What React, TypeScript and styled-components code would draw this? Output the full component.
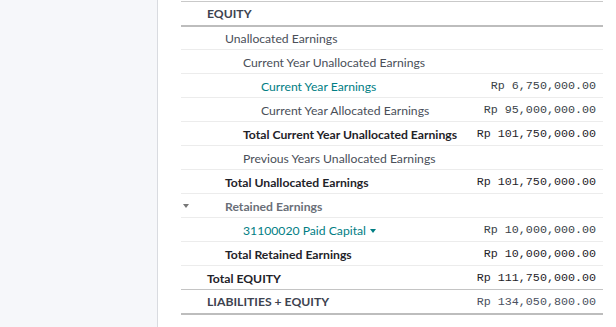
import styled, { createGlobalStyle } from 'styled-components'

const GlobalStyle = createGlobalStyle`
  html, body {
    margin: 0;
    padding: 0;
    background: #ffffff;
  }
  body {
    font-family: 'Lato', 'Open Sans', sans-serif;
  }
`

type Tone = 'normal' | 'link' | 'total' | 'section' | 'muted' | 'grand'
type Line = 'light' | 'heavy' | 'medium'

interface ReportLine {
  id: string
  label: string
  level: number
  amount?: string
  tone: Tone
  line: Line
  caret?: boolean
  foldable?: boolean
}

const lines: ReportLine[] = [
  { id: 'equity', label: 'EQUITY', level: 0, tone: 'section', line: 'heavy' },
  { id: 'unalloc', label: 'Unallocated Earnings', level: 1, tone: 'normal', line: 'light' },
  { id: 'cyu', label: 'Current Year Unallocated Earnings', level: 2, tone: 'normal', line: 'light' },
  { id: 'cye', label: 'Current Year Earnings', level: 3, amount: 'Rp 6,750,000.00', tone: 'link', line: 'light' },
  { id: 'cyae', label: 'Current Year Allocated Earnings', level: 3, amount: 'Rp 95,000,000.00', tone: 'normal', line: 'light' },
  { id: 'tcyu', label: 'Total Current Year Unallocated Earnings', level: 2, amount: 'Rp 101,750,000.00', tone: 'total', line: 'light' },
  { id: 'pyu', label: 'Previous Years Unallocated Earnings', level: 2, tone: 'normal', line: 'light' },
  { id: 'tu', label: 'Total Unallocated Earnings', level: 1, amount: 'Rp 101,750,000.00', tone: 'total', line: 'light' },
  { id: 're', label: 'Retained Earnings', level: 1, tone: 'muted', line: 'light', foldable: true },
  { id: 'pc', label: '31100020 Paid Capital', level: 2, amount: 'Rp 10,000,000.00', tone: 'link', line: 'light', caret: true },
  { id: 'tre', label: 'Total Retained Earnings', level: 1, amount: 'Rp 10,000,000.00', tone: 'total', line: 'light' },
  { id: 'te', label: 'Total EQUITY', level: 0, amount: 'Rp 111,750,000.00', tone: 'total', line: 'medium' },
  { id: 'le', label: 'LIABILITIES + EQUITY', level: 0, amount: 'Rp 134,050,800.00', tone: 'grand', line: 'heavy' },
]

const toneColor: Record<Tone, string> = {
  normal: '#4a4f59',
  link: '#017e84',
  total: '#1f2329',
  section: '#3d4350',
  muted: '#6a6f78',
  grand: '#3d4350',
}

const amountColor: Record<Tone, string> = {
  normal: '#3a3f48',
  link: '#3a3f48',
  total: '#1f2329',
  section: '#1f2329',
  muted: '#3a3f48',
  grand: '#4a5060',
}

const lineStyle: Record<Line, string> = {
  light: '1px solid #ececec',
  medium: '1px solid #c4c4c4',
  heavy: '2px solid #bdbdbd',
}

const App = () => (
  <>
    <GlobalStyle />
    <Page>
      <Sidebar />
      <Content>
        <Report>
          <tbody>
            {lines.map((row) => (
              <Row key={row.id} $line={row.line}>
                <LabelCell $level={row.level} $tone={row.tone}>
                  {row.foldable && <Fold />}
                  {row.label}
                  {row.caret && <Caret />}
                </LabelCell>
                <AmountCell $tone={row.tone}>{row.amount}</AmountCell>
              </Row>
            ))}
          </tbody>
        </Report>
      </Content>
    </Page>
  </>
)

const Page = styled.div`
  display: flex;
  height: 327px;
  overflow: hidden;
`

const Sidebar = styled.aside`
  width: 157px;
  flex: none;
  background: #f6f7fa;
  border-right: 1px solid #d9dbe0;
`

const Content = styled.main`
  flex: 1;
  padding: 0 13px 0 23px;
`

const Report = styled.table`
  width: 100%;
  border-collapse: collapse;
  border-top: 1px solid #c9c9c9;
  margin-top: 1px;
`

const Row = styled.tr<{ $line: Line }>`
  height: 24px;
  border-bottom: ${(p) => lineStyle[p.$line]};
`

const LabelCell = styled.td<{ $level: number; $tone: Tone }>`
  position: relative;
  padding: 1px 0 0 ${(p) => 26 + p.$level * 18}px;
  font-size: 12.2px;
  white-space: nowrap;
  color: ${(p) => toneColor[p.$tone]};
  font-weight: ${(p) => (['total', 'section', 'grand', 'muted'].includes(p.$tone) ? 700 : 400)};
`

const AmountCell = styled.td<{ $tone: Tone }>`
  padding: 1px 7px 0 0;
  text-align: right;
  white-space: nowrap;
  font-family: 'Liberation Mono', monospace;
  font-size: 11.7px;
  color: ${(p) => amountColor[p.$tone]};
`

const Fold = styled.span`
  position: absolute;
  left: 2px;
  top: 50%;
  margin-top: -2px;
  border-left: 3.5px solid transparent;
  border-right: 3.5px solid transparent;
  border-top: 4px solid #777;
`

const Caret = styled.span`
  display: inline-block;
  margin-left: 4px;
  vertical-align: middle;
  border-left: 3.5px solid transparent;
  border-right: 3.5px solid transparent;
  border-top: 4px solid #017e84;
`

export default App
